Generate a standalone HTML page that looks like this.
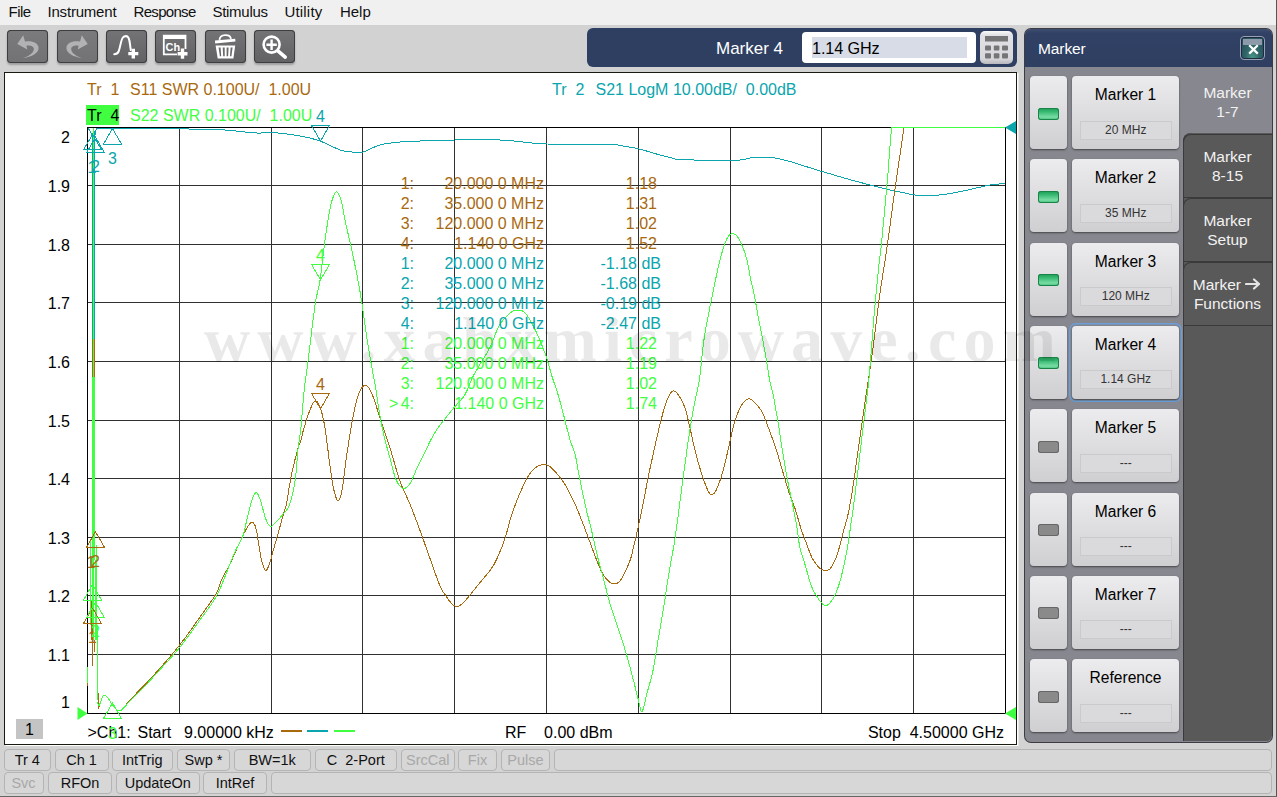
<!DOCTYPE html>
<html>
<head>
<meta charset="utf-8">
<title>Network Analyzer</title>
<style>
html,body{margin:0;padding:0;}
body{width:1277px;height:797px;overflow:hidden;position:relative;background:#d3d3d3;font-family:"Liberation Sans",sans-serif;color:#000;}
.abs{position:absolute;}
#menubar{left:0;top:0;width:1277px;height:25px;background:#f0f0f0;}
#menubar span{position:absolute;top:3px;font-size:15px;color:#111;white-space:nowrap;}
#toolbar{left:0;top:25px;width:1277px;height:47px;background:#d2d2d2;}
.tbtn{position:absolute;top:30px;width:41px;height:33px;border-radius:4px;background:linear-gradient(#747477,#626265);box-shadow:0 0 0 1px #3e3e40 inset,0 2px 2px rgba(0,0,0,.25);}
.tbtn.dis{background:linear-gradient(#7b7b7e,#727275);}
.tbtn svg{position:absolute;left:0;top:0;}
#entry{left:587px;top:28px;width:430px;height:39px;background:#2f3f62;border-radius:6px;}
#entry .lbl{position:absolute;left:129px;top:10.5px;font-size:17px;color:#fff;white-space:nowrap;}
#entry .inp{position:absolute;left:215px;top:4px;width:174px;height:31px;background:#fff;border-radius:4px;}
#entry .sel{position:absolute;left:10px;top:5px;width:155px;height:21px;background:#d8dce7;}
#entry .val{position:absolute;left:10px;top:6.5px;font-size:16.2px;letter-spacing:-0.1px;color:#000;white-space:nowrap;}
#entry .kp{position:absolute;left:393px;top:3px;width:33px;height:33px;border-radius:5px;background:linear-gradient(#fafafa 0,#e2e2e6 12%,#d6d6da 85%,#b8b8bc 100%);}
#plotwin{left:4px;top:72px;width:1013px;height:673px;background:#fff;border:1px solid #1a1a10;box-sizing:border-box;box-shadow:1.5px 1px 0 #fff;}
#plotsvg{left:0;top:0;}
.t17{font-size:17px;white-space:nowrap;position:absolute;}
#panel{left:1025px;top:29px;width:247px;height:713px;background:#87878f;border-radius:6px;box-shadow:0 0 0 1px #3c3c42;}
#phead{left:0;top:0;width:247px;height:38px;background:linear-gradient(#3d4d70 0,#314165 12%,#2f3f62 100%);border-radius:6px 6px 0 0;}
#phead .ttl{position:absolute;left:13px;top:11px;color:#fff;font-size:15.5px;letter-spacing:-0.1px;}
#tabs{left:158px;top:104px;width:89px;height:608px;background:#595959;border-radius:8px 0 6px 0;box-shadow:1px 0 0 #3a3a3a inset;}
.tabbox{position:absolute;left:158px;width:89px;height:64.6px;box-sizing:border-box;border:1px solid #3a3a3a;border-right:none;border-radius:8px 0 0 0;background:#595959;}
.tab{position:absolute;left:158px;width:89px;text-align:center;color:#f2f2f2;font-size:15.5px;line-height:19.3px;white-space:nowrap;}
#phead .cls{position:absolute;left:215px;top:7px;width:25px;height:24px;box-sizing:border-box;border:1px solid #97a1b3;border-radius:4px;background:radial-gradient(ellipse at 50% 100%,#4c9a88 0,#2f6468 45%,#254a58 100%);box-shadow:0 0 0 1px #1c2a40 inset;}
#phead .cls .hl{position:absolute;left:2px;top:2px;width:19px;height:6px;background:#8c9aa9;}
.tog{position:absolute;left:5px;width:37px;height:73px;border-radius:4px;background:linear-gradient(#ececee,#cfcfd2);box-shadow:0 1px 2px rgba(0,0,0,.5);}
.led{position:absolute;left:8px;top:31.5px;width:21px;height:12px;border-radius:3px;background:#8a8a8a;box-shadow:0 0 0 1px #666 inset;}
.led.on{background:linear-gradient(#1f9a55 0,#35b870 30%,#7adca4 75%,#3fbf7a 100%);box-shadow:0 0 0 1px #1a8448 inset;}
.mb{position:absolute;left:47px;width:107px;height:73px;border-radius:4px;background:linear-gradient(#ececee,#cfcfd2);box-shadow:0 1px 2px rgba(0,0,0,.5);}
.mb .n{position:absolute;left:0;top:10px;width:107px;text-align:center;font-size:15.6px;color:#000;}
.mb .v{position:absolute;left:7.5px;top:44.5px;width:92.5px;height:19px;background:#dadadc;box-shadow:0 0 0 1px #cacacc inset;text-align:center;font-size:12px;line-height:19px;color:#333;}
.mb.act{box-shadow:0 1px 2px rgba(0,0,0,.5),0 0 0 1.6px #87878f,0 0 0 3px #6a9ed8;}
#wm{left:204px;top:303.5px;font-family:"Liberation Serif",serif;font-weight:bold;font-size:64px;letter-spacing:7.1px;color:rgba(0,0,0,0.085);white-space:nowrap;line-height:71px;}
.sbtn{position:absolute;height:21.5px;box-sizing:border-box;border-radius:4px;background:#d7d7d7;border:1px solid #b4b4b4;font-size:14.5px;line-height:20.5px;text-align:center;color:#111;white-space:nowrap;}
.sbtn.dis{color:#a8a8a8;}
</style>
</head>
<body>
<div id="menubar" class="abs">
<span style="left:8.5px;letter-spacing:-0.5px">File</span><span style="left:47.5px;letter-spacing:-0.2px">Instrument</span><span style="left:133.5px;letter-spacing:-0.68px">Response</span><span style="left:212.4px;letter-spacing:-0.26px">Stimulus</span><span style="left:284.4px;letter-spacing:0.2px">Utility</span><span style="left:339.9px">Help</span>
</div>
<div id="toolbar" class="abs"></div>
<div class="tbtn dis" style="left:7px"><svg width="41" height="33" viewBox="0 0 41 33"><path d="M16.2,5.3 L10.3,14.1 L20.3,19.4 L19.4,15.8 C23,15 27,16.5 26.8,19.2 C26.5,23 22,26 15.8,28.2 C24,27 31.6,23.5 31.6,18 C31.6,13 25,10.3 18,11.6 Z" fill="#b2b2b4"/></svg></div>
<div class="tbtn dis" style="left:57px"><svg width="41" height="33" viewBox="0 0 41 33"><g transform="translate(41,0) scale(-1,1)"><path d="M16.2,5.3 L10.3,14.1 L20.3,19.4 L19.4,15.8 C23,15 27,16.5 26.8,19.2 C26.5,23 22,26 15.8,28.2 C24,27 31.6,23.5 31.6,18 C31.6,13 25,10.3 18,11.6 Z" fill="#b2b2b4"/></g></svg></div>
<div class="tbtn" style="left:106px"><svg width="41" height="33" viewBox="0 0 41 33"><path d="M8.2,24.2 C10,24.2 11.5,24 12.6,21.5 C14.5,17 15,8 17.5,6.8 C19.5,5.8 21.5,6 22.6,8 C24,11 24,15.5 24.8,20" stroke="#fff" stroke-width="2" fill="none" stroke-linecap="round"/><path d="M22.3,23.6 H32.3 M27.3,18.8 V28.6" stroke="#fff" stroke-width="3.4" fill="none"/></svg></div>
<div class="tbtn" style="left:155px"><svg width="41" height="33" viewBox="0 0 41 33"><path d="M7.9,4.7 H31.4 V19 H29.6 V9 H9.7 V23.5 H22 V25.3 H7.9 Z" fill="#fff"/><text x="10.6" y="21" font-size="11.5" font-weight="bold" fill="#fff" font-family="Liberation Sans, sans-serif" textLength="14.5" lengthAdjust="spacingAndGlyphs">Ch</text><path d="M22.6,23.7 H32.5 M27.5,18.6 V28.8" stroke="#fff" stroke-width="3.4" fill="none"/></svg></div>
<div class="tbtn" style="left:205px"><svg width="41" height="33" viewBox="0 0 41 33"><path d="M14.5,9.8 C15,4 25,3.5 26,8.8" stroke="#fff" stroke-width="1.8" fill="none"/><path d="M10,10.6 L30.2,8.8 L30.4,11.6 L10.2,13.4 Z" fill="#fff"/><path d="M10.6,15.6 H30.2 L28.4,28.4 H12.7 Z M13.6,17.6 L14.9,26.2 H16.2 L15.6,17.6 Z M17.7,17.6 L18.2,26.2 H19.7 V17.6 Z M21.6,17.6 V26.2 H23.1 L23.6,17.6 Z M25.6,17.6 L25,26.2 H26.4 L27.6,17.6 Z" fill="#fff" fill-rule="evenodd"/></svg></div>
<div class="tbtn" style="left:254px"><svg width="41" height="33" viewBox="0 0 41 33"><circle cx="17.6" cy="14.6" r="8" stroke="#fff" stroke-width="2.6" fill="none"/><path d="M12.4,14.8 H22.8 M17.6,9.6 V20" stroke="#fff" stroke-width="2.4" fill="none"/><path d="M24.2,21.2 L31.2,27.2" stroke="#fff" stroke-width="3.6" stroke-linecap="round"/></svg></div>
<div id="entry" class="abs"><div class="lbl">Marker 4</div><div class="inp"><div class="sel"></div><div class="val">1.14 GHz</div></div><div class="kp"><svg width="33" height="33" viewBox="0 0 33 33" style="position:absolute;left:0;top:0"><g fill="#757577"><rect x="5" y="5" width="23" height="5.5"/><rect x="5" y="14.4" width="6" height="5" rx="1"/><rect x="13.8" y="14.4" width="5.6" height="5" rx="1"/><rect x="22" y="14.4" width="6" height="5" rx="1"/><rect x="5" y="22.2" width="6" height="5.4" rx="1"/><rect x="13.8" y="22.2" width="5.6" height="5.4" rx="1"/><rect x="22" y="22.2" width="6" height="5.4" rx="1"/></g></svg></div></div>
<div id="plotwin" class="abs"></div>
<svg id="plotsvg" class="abs" width="1277" height="797" viewBox="0 0 1277 797" style="font-family:'Liberation Sans',sans-serif">
<g shape-rendering="crispEdges" stroke="#303030" stroke-width="1">
<line x1="179.5" y1="127.5" x2="179.5" y2="713.5"/>
<line x1="87.5" y1="185.5" x2="1005.5" y2="185.5"/>
<line x1="271.5" y1="127.5" x2="271.5" y2="713.5"/>
<line x1="87.5" y1="244.5" x2="1005.5" y2="244.5"/>
<line x1="362.5" y1="127.5" x2="362.5" y2="713.5"/>
<line x1="87.5" y1="302.5" x2="1005.5" y2="302.5"/>
<line x1="454.5" y1="127.5" x2="454.5" y2="713.5"/>
<line x1="87.5" y1="361.5" x2="1005.5" y2="361.5"/>
<line x1="546.5" y1="127.5" x2="546.5" y2="713.5"/>
<line x1="87.5" y1="420.5" x2="1005.5" y2="420.5"/>
<line x1="638.5" y1="127.5" x2="638.5" y2="713.5"/>
<line x1="87.5" y1="478.5" x2="1005.5" y2="478.5"/>
<line x1="730.5" y1="127.5" x2="730.5" y2="713.5"/>
<line x1="87.5" y1="537.5" x2="1005.5" y2="537.5"/>
<line x1="821.5" y1="127.5" x2="821.5" y2="713.5"/>
<line x1="87.5" y1="595.5" x2="1005.5" y2="595.5"/>
<line x1="913.5" y1="127.5" x2="913.5" y2="713.5"/>
<line x1="87.5" y1="654.5" x2="1005.5" y2="654.5"/>
</g>
<rect x="87.5" y="127.5" width="918.0" height="586.0" fill="none" stroke="#000" stroke-width="1" shape-rendering="crispEdges"/>
<text x="70" y="142.5" font-size="16" text-anchor="end" fill="#000">2</text>
<text x="70" y="192.1" font-size="16" text-anchor="end" fill="#000">1.9</text>
<text x="70" y="250.7" font-size="16" text-anchor="end" fill="#000">1.8</text>
<text x="70" y="309.3" font-size="16" text-anchor="end" fill="#000">1.7</text>
<text x="70" y="367.9" font-size="16" text-anchor="end" fill="#000">1.6</text>
<text x="70" y="426.5" font-size="16" text-anchor="end" fill="#000">1.5</text>
<text x="70" y="485.1" font-size="16" text-anchor="end" fill="#000">1.4</text>
<text x="70" y="543.7" font-size="16" text-anchor="end" fill="#000">1.3</text>
<text x="70" y="602.3" font-size="16" text-anchor="end" fill="#000">1.2</text>
<text x="70" y="660.9" font-size="16" text-anchor="end" fill="#000">1.1</text>
<text x="70" y="707.5" font-size="16" text-anchor="end" fill="#000">1</text>
<g shape-rendering="crispEdges">
<polyline points="88.0,128.0 90.0,131.0 92.0,135.0" fill="none" stroke="#0aa5ad" stroke-width="1" />
<line x1="92.5" y1="133" x2="92.5" y2="339" stroke="#0aa5ad"/>
<line x1="94.5" y1="131" x2="94.5" y2="339" stroke="#0aa5ad"/>
<polyline points="97.0,128.6 98.8,128.6 101.2,128.6 105.2,128.6 112.0,128.6 123.0,128.6 137.2,128.6 152.1,128.6 165.0,128.6 175.2,128.7 184.2,128.9 192.4,129.1 200.0,129.3 207.2,129.5 213.8,129.6 219.7,129.8 225.0,130.0 229.4,130.3 233.0,130.7 236.4,131.1 240.0,131.5 244.3,131.9 248.8,132.4 253.1,132.7 256.7,133.0 259.2,133.1 261.0,133.0 262.5,132.9 264.0,132.8 265.5,132.7 266.8,132.5 268.2,132.4 270.0,132.4 272.0,132.5 274.1,132.6 276.7,132.8 280.0,133.2 284.3,133.7 289.4,134.3 294.8,135.1 300.0,136.0 305.0,137.0 310.0,138.1 315.0,139.4 320.0,141.0 325.2,143.1 330.5,145.7 335.6,148.1 340.0,150.0 343.6,151.0 346.6,151.6 349.3,151.8 352.0,152.0 354.7,152.3 357.2,152.6 359.9,152.5 363.0,152.0 366.8,150.6 370.9,148.7 375.4,146.6 380.0,145.0 384.8,143.9 389.8,143.1 394.9,142.5 400.0,142.0 404.6,141.6 409.1,141.4 413.9,141.2 420.0,141.0 427.5,140.7 435.9,140.4 445.2,140.2 455.0,140.0 466.1,139.9 478.4,139.8 490.3,139.9 500.0,140.0 506.6,140.3 511.1,140.7 515.1,141.2 520.0,141.7 525.4,142.3 530.8,142.9 537.6,143.5 547.0,144.0 561.5,144.2 579.6,144.3 597.1,144.4 610.0,144.5 616.0,144.7 617.8,144.8 618.2,145.1 620.0,145.5 623.8,146.1 628.2,146.8 633.0,147.6 638.0,148.7 643.5,150.1 649.4,151.9 655.1,153.6 660.0,155.0 663.8,156.0 666.9,156.8 669.5,157.4 672.0,158.0 673.8,158.5 674.9,158.9 676.5,159.2 680.0,159.5 686.0,159.8 693.6,160.0 702.0,160.2 710.0,160.3 718.0,160.3 726.2,160.3 733.9,160.2 740.0,160.0 743.9,159.6 746.1,159.0 747.8,158.5 750.0,158.0 752.8,157.7 755.8,157.4 758.9,157.3 762.0,157.2 765.1,157.2 768.3,157.3 771.6,157.6 775.0,158.0 778.7,158.7 782.7,159.6 786.6,160.6 790.0,161.5 792.6,162.2 794.6,162.9 796.8,163.6 800.0,164.6 804.3,166.0 809.3,167.6 814.9,169.3 821.0,171.2 827.9,173.2 835.6,175.5 843.2,177.7 850.0,179.6 855.6,181.2 860.6,182.5 865.2,183.7 870.0,185.0 875.1,186.3 880.3,187.7 885.4,188.9 890.0,190.0 894.2,190.9 898.1,191.7 901.7,192.4 905.0,193.0 907.6,193.6 909.7,194.2 911.9,194.6 915.0,195.0 919.4,195.2 924.7,195.4 930.1,195.4 935.0,195.3 939.0,195.0 942.5,194.7 946.0,194.2 950.0,193.5 954.6,192.7 959.7,191.7 964.9,190.6 970.0,189.5 975.1,188.3 980.3,187.1 985.4,185.9 990.0,185.0 994.5,184.4 998.8,184.0 1002.4,183.7 1005.0,183.5" fill="none" stroke="#0aa5ad" stroke-width="1" />
<polyline points="94.5,140.0 95.5,131.0 97.0,128.6" fill="none" stroke="#0aa5ad" stroke-width="1" />
<line x1="93.5" y1="339" x2="93.5" y2="377" stroke="#a8690f" stroke-width="3"/>
<line x1="92.5" y1="625.0" x2="92.5" y2="666.0" stroke="#a8690f"/>
<line x1="91.5" y1="600.0" x2="91.5" y2="640.0" stroke="#a8690f"/>
<line x1="94.5" y1="640.0" x2="94.5" y2="652.0" stroke="#a8690f"/>
<line x1="97.5" y1="647.0" x2="97.5" y2="651.0" stroke="#a8690f"/>
<line x1="97.5" y1="688.0" x2="97.5" y2="693.0" stroke="#a8690f"/>
<line x1="98.5" y1="693.0" x2="98.5" y2="709.0" stroke="#a8690f"/>
<line x1="87.5" y1="683.0" x2="87.5" y2="685.5" stroke="#a8690f"/>
<polyline points="98.6,708.9 98.8,708.0 99.2,706.6 99.5,705.1 100.0,703.5 100.5,702.0 101.1,700.5 101.7,698.9 102.4,697.3 103.2,696.0 103.9,695.3 104.7,695.2 105.4,695.4 106.3,696.1 107.1,697.0 108.0,698.0 108.9,699.3 109.9,701.0 110.9,702.8 111.9,704.5 113.0,706.0 114.1,707.3 115.3,708.6 116.6,709.8 117.8,710.6 118.9,711.0 120.0,710.8 121.0,710.2 121.9,709.2 122.9,708.1 124.0,707.0 125.0,705.9 126.0,704.7 127.1,703.4 128.3,701.9 130.0,700.0 132.2,697.7 134.7,695.1 137.5,692.2 140.3,689.3 143.0,686.5 145.4,684.0 147.7,681.7 150.0,679.3 152.7,676.4 156.0,672.7 160.2,668.0 165.0,662.5 170.2,656.5 175.3,650.4 180.0,644.6 184.3,639.0 188.5,633.3 192.5,627.7 196.3,622.2 200.0,617.0 203.6,612.0 207.2,607.0 210.5,602.3 213.5,598.0 216.0,594.0 217.7,590.7 218.8,587.9 219.6,585.4 220.4,582.9 221.6,580.0 223.2,576.8 224.9,573.5 226.8,570.1 228.7,566.4 230.6,562.6 232.6,558.3 234.7,553.6 236.8,548.8 238.8,544.4 240.6,540.5 242.1,537.3 243.4,534.6 244.5,532.3 245.6,530.3 246.7,528.4 247.8,526.6 248.8,525.0 249.8,523.7 250.8,522.8 251.7,522.4 252.6,522.5 253.4,523.0 254.2,524.0 255.0,525.4 255.7,527.4 256.4,530.1 257.0,533.4 257.5,537.2 258.1,541.0 258.7,544.5 259.3,547.9 259.9,551.3 260.4,554.6 261.0,557.8 261.7,560.6 262.4,563.3 263.2,565.9 264.0,568.2 264.9,569.8 265.7,570.6 266.5,570.2 267.3,569.0 268.2,567.1 269.0,564.9 269.8,562.6 270.6,560.2 271.4,557.4 272.2,554.4 273.0,551.4 273.8,548.5 274.6,545.8 275.4,543.1 276.1,540.4 276.9,537.6 277.8,534.5 278.8,531.1 279.8,527.4 280.8,523.5 281.8,519.8 282.8,516.4 283.7,513.5 284.5,511.0 285.2,508.5 286.0,505.7 286.8,502.3 287.6,498.2 288.3,493.5 289.0,488.5 289.9,483.3 290.8,478.2 291.9,472.9 293.2,467.2 294.5,461.6 295.8,456.4 296.9,452.0 297.8,448.7 298.7,446.2 299.5,444.1 300.2,442.2 300.9,440.0 301.5,437.7 302.1,435.5 302.6,433.2 303.2,430.8 304.0,428.0 305.0,424.6 306.2,420.8 307.5,416.8 308.8,413.1 310.0,410.0 311.1,407.4 312.1,405.0 313.0,403.1 314.0,401.7 315.0,401.0 316.0,401.0 317.0,401.6 318.0,402.8 319.0,404.6 320.0,407.0 321.0,410.0 322.0,413.5 323.0,417.6 324.0,422.4 325.0,428.0 326.0,434.8 327.0,442.8 328.1,451.2 329.1,459.4 330.0,466.4 330.9,472.4 331.7,477.7 332.4,482.6 333.2,486.8 334.0,490.5 334.8,493.7 335.6,496.5 336.4,498.6 337.2,500.0 338.0,500.5 338.8,500.1 339.6,498.9 340.4,496.9 341.2,494.1 342.0,490.5 342.8,485.8 343.5,480.1 344.3,473.7 345.1,466.9 346.0,460.0 347.1,452.7 348.3,444.8 349.5,436.7 350.8,429.0 352.0,422.0 353.2,415.8 354.4,410.0 355.5,404.7 356.7,400.0 358.0,396.0 359.3,392.5 360.7,389.6 362.2,387.2 363.6,385.7 365.0,385.0 366.4,385.3 367.8,386.4 369.1,388.4 370.5,390.9 372.0,394.0 373.5,397.7 375.0,402.2 376.6,407.2 378.3,412.6 380.0,418.0 381.9,423.6 383.9,429.4 385.9,435.5 388.0,441.7 390.0,448.0 392.0,454.6 394.0,461.5 396.0,468.5 398.0,475.2 400.0,481.2 402.0,486.4 404.0,491.0 406.0,495.3 408.0,499.6 410.0,504.3 412.0,509.3 414.0,514.4 416.0,519.7 418.0,525.0 420.0,530.4 422.0,535.9 424.0,541.5 426.0,547.2 428.0,552.9 430.0,558.5 432.1,564.3 434.2,570.4 436.3,576.3 438.3,581.6 440.0,586.0 441.5,589.2 442.7,591.4 443.8,593.0 444.9,594.4 446.0,596.0 447.2,597.8 448.4,599.6 449.7,601.3 450.9,602.8 452.0,604.0 453.0,604.9 454.0,605.7 455.0,606.2 456.0,606.5 457.0,606.5 458.1,606.3 459.3,605.7 460.5,605.0 461.7,604.1 463.0,603.0 464.3,601.8 465.6,600.3 466.9,598.7 468.4,597.0 470.0,595.0 471.8,592.8 473.8,590.3 475.9,587.7 478.0,585.1 480.0,582.6 482.0,580.2 484.1,577.7 486.2,575.3 488.2,572.9 490.0,570.5 491.6,568.2 493.0,566.1 494.3,563.9 495.6,561.4 497.0,558.5 498.6,555.0 500.3,550.9 502.0,546.7 503.6,542.4 505.0,538.4 506.2,534.7 507.1,531.1 508.0,527.6 508.9,524.0 510.0,520.3 511.3,516.4 512.6,512.3 514.0,508.2 515.5,504.1 517.0,500.2 518.6,496.3 520.2,492.5 521.9,488.7 523.5,485.3 525.0,482.2 526.3,479.6 527.5,477.4 528.7,475.4 529.8,473.7 531.0,472.1 532.2,470.7 533.4,469.4 534.5,468.4 535.7,467.5 537.0,466.7 538.4,466.0 539.8,465.5 541.2,465.0 542.6,464.8 544.0,464.7 545.2,464.7 546.4,464.9 547.5,465.2 548.7,465.8 550.0,466.7 551.5,467.9 553.1,469.5 554.7,471.2 556.4,473.1 558.0,475.1 559.6,477.0 561.1,478.9 562.7,481.0 564.3,483.4 566.0,486.2 567.9,489.6 570.0,493.6 572.0,497.8 574.1,502.1 576.0,506.3 577.8,510.4 579.4,514.5 581.0,518.6 582.6,522.6 584.0,526.3 585.3,529.8 586.5,533.0 587.7,536.1 588.8,539.2 590.0,542.4 591.2,545.7 592.4,548.9 593.6,552.2 594.8,555.4 596.0,558.5 597.2,561.5 598.4,564.5 599.6,567.4 600.8,570.1 602.0,572.5 603.2,574.6 604.4,576.4 605.6,578.0 606.8,579.4 608.0,580.6 609.2,581.7 610.4,582.7 611.5,583.4 612.7,583.9 614.0,584.0 615.3,583.9 616.6,583.5 618.0,582.8 619.5,581.5 621.0,579.6 622.8,576.7 624.7,572.8 626.7,568.6 628.5,564.3 630.0,560.5 631.1,557.2 632.0,554.1 632.6,551.1 633.3,548.1 634.0,545.0 634.8,541.8 635.6,538.6 636.3,535.3 637.1,531.8 638.0,528.0 638.9,523.8 639.9,519.2 641.0,514.4 642.0,509.5 643.0,504.5 644.0,499.5 645.0,494.3 645.9,489.1 646.9,483.8 648.0,478.4 649.1,472.9 650.3,467.2 651.6,461.5 652.8,455.8 654.0,450.3 655.2,444.8 656.4,439.3 657.7,434.0 658.9,428.9 660.0,424.2 661.1,420.0 662.1,416.1 663.0,412.5 664.0,409.1 665.0,406.0 666.0,403.1 667.0,400.3 668.1,397.9 669.1,395.7 670.0,394.0 670.8,392.7 671.6,391.8 672.4,391.2 673.2,390.9 674.0,391.0 674.9,391.4 675.9,392.1 676.9,393.1 677.9,394.4 679.0,396.0 680.2,397.8 681.4,399.9 682.6,402.3 683.8,405.0 685.0,408.0 686.1,411.5 687.1,415.3 688.0,419.5 689.0,423.7 690.0,428.0 691.0,432.4 692.0,437.0 693.0,441.6 694.0,446.1 695.0,450.3 696.0,454.2 697.0,458.0 698.0,461.6 699.0,465.0 700.0,468.4 701.0,471.7 702.0,474.9 703.1,478.0 704.1,480.9 705.0,483.5 705.9,485.8 706.7,487.9 707.5,489.7 708.3,491.2 709.0,492.5 709.6,493.4 710.2,494.1 710.8,494.5 711.4,494.6 712.0,494.5 712.7,494.3 713.4,493.9 714.2,493.3 715.1,492.2 716.0,490.5 717.1,488.2 718.3,485.3 719.5,482.0 720.8,478.3 722.0,474.4 723.2,470.1 724.4,465.4 725.6,460.5 726.8,455.4 728.0,450.3 729.2,445.0 730.4,439.5 731.6,434.0 732.8,428.8 734.0,424.2 735.2,420.2 736.4,416.6 737.7,413.3 738.9,410.5 740.0,408.0 741.1,405.9 742.1,404.3 743.0,403.0 744.0,401.9 745.0,401.0 746.0,400.2 747.0,399.6 748.0,399.1 749.0,398.9 750.0,399.0 751.0,399.3 751.9,399.9 752.9,400.8 753.9,401.8 755.0,403.0 756.3,404.3 757.6,405.7 759.0,407.4 760.5,409.4 762.0,412.0 763.6,415.3 765.2,419.2 766.8,423.5 768.4,427.8 770.0,432.0 771.5,436.0 772.9,440.1 774.3,444.2 775.7,448.2 777.0,452.3 778.3,456.3 779.5,460.4 780.6,464.4 781.8,468.4 783.0,472.4 784.2,476.5 785.4,480.6 786.6,484.8 787.8,488.7 789.0,492.5 790.2,495.9 791.4,499.0 792.6,502.0 793.8,505.1 795.0,508.5 796.2,512.3 797.4,516.4 798.6,520.6 799.8,524.8 801.0,528.6 802.2,532.2 803.4,535.6 804.7,538.9 805.9,542.0 807.0,545.0 808.0,547.8 809.0,550.5 810.0,553.1 811.0,555.5 812.0,557.7 813.2,559.8 814.4,561.7 815.7,563.5 816.9,565.1 818.0,566.4 818.9,567.4 819.7,568.1 820.5,568.6 821.2,569.0 822.0,569.4 822.8,569.8 823.6,570.2 824.3,570.6 825.1,570.7 826.0,570.7 826.9,570.5 827.9,570.1 829.0,569.6 830.0,568.8 831.0,567.7 832.0,566.2 833.0,564.3 834.1,562.2 835.1,560.0 836.0,557.7 836.9,555.3 837.7,552.8 838.5,550.2 839.3,547.6 840.0,545.0 840.6,542.6 841.2,540.3 841.7,537.9 842.3,535.4 843.0,532.6 843.9,529.5 844.9,526.3 845.9,522.8 847.0,518.9 848.0,514.6 849.0,509.6 850.0,504.1 851.1,498.2 852.1,492.3 853.0,486.5 853.9,480.9 854.7,475.3 855.4,469.7 856.2,464.0 857.0,458.4 857.8,452.7 858.6,447.0 859.4,441.3 860.2,435.7 861.0,430.0 861.8,424.3 862.6,418.7 863.4,413.0 864.2,407.5 865.0,402.0 865.8,396.8 866.6,391.9 867.3,387.0 868.1,381.8 869.0,376.0 869.9,369.6 870.9,362.7 872.0,355.5 873.0,348.1 874.0,340.5 875.0,332.4 876.1,323.7 877.1,315.0 878.1,306.9 879.0,300.0 879.7,294.9 880.2,291.3 880.7,288.2 881.3,284.7 882.0,280.0 882.9,274.2 883.9,267.8 885.0,260.8 886.2,252.9 887.5,244.0 888.9,233.7 890.5,222.2 892.1,209.9 893.8,197.5 895.5,185.5 897.3,172.9 899.3,159.5 901.2,146.5 902.8,135.4 904.0,127.5" fill="none" stroke="#a8690f" stroke-width="1" />
<line x1="93.5" y1="128.0" x2="93.5" y2="640.0" stroke="#40ff40"/>
<line x1="92.5" y1="377.0" x2="92.5" y2="625.0" stroke="#40ff40"/>
<line x1="94.5" y1="377.0" x2="94.5" y2="560.0" stroke="#40ff40"/>
<line x1="90.5" y1="540.0" x2="90.5" y2="625.0" stroke="#40ff40"/>
<line x1="95.5" y1="560.0" x2="95.5" y2="640.0" stroke="#40ff40"/>
<line x1="96.5" y1="545.0" x2="96.5" y2="640.0" stroke="#40ff40"/>
<line x1="97.5" y1="625.0" x2="97.5" y2="700.0" stroke="#40ff40"/>
<line x1="87.5" y1="667.0" x2="87.5" y2="683.0" stroke="#40ff40"/>
<polyline points="97.4,702.0 97.6,702.7 97.9,703.7 98.3,704.8 98.7,705.6 99.0,706.0 99.3,705.8 99.5,705.1 99.8,704.2 100.1,703.1 100.5,702.0 101.0,700.7 101.7,699.1 102.4,697.4 103.1,696.1 103.9,695.3 104.7,695.2 105.4,695.4 106.3,696.1 107.1,697.0 108.0,698.0 108.9,699.3 109.9,701.0 110.9,702.8 111.9,704.5 113.0,706.0 114.1,707.3 115.3,708.6 116.6,709.8 117.8,710.6 118.9,711.0 120.0,710.9 121.0,710.4 121.9,709.5 122.9,708.5 124.0,707.5 125.0,706.5 126.0,705.4 127.1,704.2 128.3,702.8 130.0,701.0 132.2,698.8 134.7,696.3 137.5,693.6 140.3,690.8 143.0,688.0 145.4,685.5 147.7,683.1 150.0,680.6 152.7,677.6 156.0,674.0 160.2,669.4 165.0,664.1 170.2,658.4 175.3,652.6 180.0,647.0 184.3,641.5 188.5,636.0 192.5,630.5 196.3,625.1 200.0,620.0 203.6,615.0 207.1,610.2 210.4,605.6 213.4,601.2 216.0,597.0 218.0,593.4 219.5,590.3 220.7,587.3 222.0,584.0 223.6,580.0 225.6,575.0 227.9,569.2 230.2,563.2 232.5,557.4 234.6,552.5 236.5,548.6 238.2,545.3 239.9,542.4 241.4,539.5 242.7,536.5 243.8,533.3 244.6,530.1 245.3,526.8 246.0,523.6 246.7,520.4 247.5,517.1 248.3,513.6 249.2,510.2 250.0,507.1 250.7,504.3 251.4,501.9 252.0,499.9 252.5,498.1 253.1,496.6 253.7,495.3 254.3,494.3 254.9,493.5 255.5,493.0 256.1,492.8 256.7,492.9 257.3,493.4 257.9,494.3 258.5,495.4 259.1,496.8 259.7,498.3 260.3,500.0 260.9,501.9 261.4,503.9 262.0,506.1 262.7,508.4 263.4,510.9 264.2,513.8 265.0,516.6 265.9,519.3 266.7,521.4 267.5,523.1 268.3,524.4 269.1,525.4 269.9,526.1 270.8,526.4 271.7,526.2 272.6,525.6 273.6,524.7 274.7,523.6 275.8,522.4 277.1,521.1 278.5,519.5 280.0,517.8 281.4,516.1 282.8,514.4 284.1,512.9 285.4,511.5 286.6,510.0 287.7,508.3 288.8,506.3 289.8,503.9 290.6,501.3 291.4,498.5 292.2,495.5 292.9,492.3 293.6,489.0 294.2,485.6 294.8,482.1 295.4,478.3 295.9,474.2 296.3,469.7 296.7,464.9 297.1,459.8 297.5,454.8 297.9,450.0 298.4,445.7 299.0,441.7 299.6,437.7 300.3,433.3 300.9,428.0 301.5,421.6 302.1,414.4 302.7,406.7 303.3,399.1 304.0,392.0 304.7,385.9 305.4,380.4 306.1,374.9 307.0,368.7 308.0,361.0 309.2,351.0 310.7,339.1 312.2,326.7 313.7,315.0 315.0,305.5 316.1,298.7 317.2,293.6 318.2,289.5 319.1,285.4 320.0,280.4 320.9,274.2 321.7,267.5 322.5,260.7 323.2,254.0 324.0,247.8 324.7,242.2 325.5,237.0 326.2,232.0 326.9,227.3 327.6,222.7 328.3,218.2 329.0,213.9 329.8,209.7 330.6,205.9 331.4,202.6 332.3,199.5 333.3,196.6 334.3,194.2 335.4,192.5 336.4,191.8 337.4,192.2 338.5,193.6 339.5,195.8 340.5,198.4 341.4,201.3 342.2,204.6 342.9,208.5 343.7,212.8 344.4,217.1 345.2,221.4 346.1,225.4 347.1,229.4 348.0,233.5 349.1,237.9 350.2,242.7 351.4,248.2 352.7,254.2 354.0,260.5 355.3,266.8 356.5,272.8 357.6,278.4 358.6,283.7 359.6,289.0 360.5,294.5 361.5,300.5 362.5,307.1 363.5,314.2 364.5,321.6 365.5,328.8 366.5,335.6 367.5,342.0 368.6,348.3 369.6,354.3 370.6,360.1 371.6,365.7 372.5,370.9 373.4,375.8 374.3,380.4 375.2,385.1 376.0,390.0 376.8,395.1 377.6,400.4 378.3,405.7 379.1,410.9 380.0,416.0 380.9,421.0 381.9,426.0 383.0,430.9 384.0,435.6 385.0,440.0 386.0,443.9 387.0,447.5 387.9,450.8 388.9,454.3 390.0,458.0 391.1,462.3 392.3,466.9 393.5,471.6 394.7,475.9 396.0,479.4 397.3,482.2 398.7,484.6 400.2,486.5 401.6,487.8 403.0,488.5 404.4,488.5 405.8,487.9 407.3,486.8 408.7,485.2 410.0,483.5 411.2,481.5 412.4,479.0 413.5,476.3 414.7,473.4 416.0,470.4 417.4,467.4 419.0,464.3 420.6,461.0 422.2,457.6 424.0,454.0 425.9,450.1 427.9,446.0 429.9,441.7 432.0,437.7 434.0,434.0 436.0,430.8 438.0,427.9 439.9,425.3 441.9,422.7 444.0,420.0 446.2,417.2 448.4,414.5 450.6,411.8 452.8,409.1 455.0,406.5 457.1,404.1 459.2,401.8 461.3,399.5 463.2,397.1 465.0,394.5 466.6,391.5 468.0,388.3 469.3,384.9 470.6,381.6 472.0,378.4 473.5,375.5 475.0,372.8 476.6,370.1 478.3,367.3 480.0,364.3 481.9,361.1 484.0,357.8 486.0,354.4 488.1,350.9 490.0,347.3 491.7,343.4 493.4,339.3 495.0,335.2 496.5,331.3 498.0,328.0 499.5,325.3 500.9,323.2 502.2,321.3 503.6,319.6 505.0,318.0 506.4,316.4 507.8,315.0 509.3,313.7 510.7,312.6 512.0,311.7 513.3,311.0 514.5,310.5 515.6,310.2 516.8,310.0 518.0,310.0 519.2,310.1 520.4,310.2 521.6,310.6 522.8,311.2 524.0,312.0 525.2,313.1 526.3,314.4 527.5,315.9 528.7,317.8 530.0,320.0 531.5,322.6 533.1,325.6 534.7,328.9 536.4,332.4 538.0,336.0 539.6,339.7 541.3,343.7 542.9,347.8 544.5,351.9 546.0,356.0 547.3,360.1 548.5,364.2 549.7,368.4 550.8,372.5 552.0,376.4 553.2,380.1 554.4,383.6 555.6,387.1 556.8,390.7 558.0,394.5 559.2,398.6 560.4,402.9 561.6,407.4 562.8,411.9 564.0,416.5 565.2,421.3 566.4,426.2 567.7,431.2 568.9,435.9 570.0,440.0 571.1,443.2 572.1,445.7 573.0,448.0 574.0,450.6 575.0,454.0 576.0,458.4 577.0,463.5 577.9,469.0 578.9,474.6 580.0,480.2 581.1,485.8 582.3,491.5 583.6,497.3 584.8,502.9 586.0,508.3 587.2,513.3 588.4,518.1 589.6,522.8 590.8,527.5 592.0,532.4 593.2,537.6 594.4,542.9 595.6,548.3 596.8,553.5 598.0,558.5 599.2,563.2 600.4,567.6 601.6,571.9 602.8,576.2 604.0,580.6 605.2,585.3 606.4,590.1 607.6,595.0 608.8,599.6 610.0,604.0 611.2,607.9 612.4,611.6 613.6,615.1 614.8,618.5 616.0,622.0 617.2,625.6 618.4,629.1 619.6,632.7 620.8,636.3 622.0,640.0 623.2,643.8 624.4,647.7 625.6,651.7 626.8,655.8 628.0,660.0 629.2,664.4 630.5,669.1 631.7,673.8 632.9,678.3 634.0,682.4 634.9,686.1 635.7,689.4 636.5,692.6 637.2,695.6 638.0,698.5 638.8,701.8 639.6,705.4 640.3,708.7 641.1,711.0 642.0,711.5 642.9,709.9 643.9,706.6 644.9,702.2 645.9,697.5 647.0,693.0 648.2,688.9 649.4,684.7 650.6,680.3 651.8,675.6 653.0,670.6 654.0,665.2 655.0,659.4 656.0,653.3 657.0,647.0 658.0,640.5 659.2,633.7 660.4,626.7 661.6,619.4 662.8,612.3 664.0,605.3 665.1,598.5 666.1,591.8 667.0,585.3 668.0,578.9 669.0,572.7 670.0,566.7 671.1,560.9 672.1,555.4 673.1,550.0 674.0,545.0 674.7,540.6 675.2,536.9 675.8,533.3 676.3,529.1 677.0,524.0 677.9,517.7 678.8,510.5 679.8,502.8 680.9,494.7 682.0,486.5 683.1,478.0 684.3,468.9 685.6,459.7 686.8,450.7 688.0,442.3 689.2,434.4 690.4,426.7 691.7,419.4 692.8,412.5 694.0,406.0 695.1,400.3 696.2,395.3 697.3,390.6 698.3,385.6 699.3,380.0 700.2,373.3 701.0,365.9 701.8,358.3 702.5,351.0 703.3,344.5 704.1,338.9 704.9,333.8 705.7,329.2 706.5,324.8 707.3,320.4 708.1,316.2 708.9,312.3 709.6,308.4 710.4,304.5 711.3,300.3 712.3,295.6 713.3,290.7 714.3,285.6 715.3,280.7 716.3,276.2 717.2,272.2 718.0,268.5 718.7,265.0 719.5,261.6 720.4,258.2 721.4,254.7 722.4,251.2 723.4,247.8 724.4,244.7 725.4,242.1 726.3,240.0 727.1,238.4 727.8,237.1 728.6,236.1 729.4,235.2 730.2,234.5 731.0,234.0 731.8,233.8 732.6,233.7 733.4,233.8 734.2,234.0 735.0,234.4 735.8,234.9 736.6,235.7 737.4,236.6 738.2,237.7 738.9,238.9 739.7,240.4 740.5,242.1 741.4,244.1 742.4,246.4 743.4,249.0 744.5,251.8 745.5,254.9 746.5,258.2 747.4,261.9 748.2,265.9 749.0,270.1 749.7,274.2 750.5,278.2 751.3,281.9 752.1,285.4 752.9,288.9 753.7,292.5 754.5,296.3 755.3,300.5 756.1,304.9 756.9,309.5 757.7,314.0 758.5,318.4 759.3,322.5 760.1,326.5 760.9,330.4 761.7,334.4 762.5,338.5 763.3,342.8 764.1,347.3 765.0,351.9 765.8,356.3 766.5,360.6 767.2,364.7 767.8,368.8 768.4,372.8 769.0,376.5 769.6,380.0 770.2,382.9 770.9,385.3 771.5,387.6 772.2,390.4 773.0,394.0 773.9,398.7 774.9,404.1 775.9,410.0 777.0,416.1 778.0,422.2 779.0,428.4 780.0,434.9 781.0,441.6 782.0,448.1 783.0,454.3 784.0,460.3 785.0,466.1 786.0,471.7 787.0,477.2 788.0,482.5 789.0,487.6 790.0,492.5 791.1,497.3 792.1,501.9 793.0,506.5 793.9,511.0 794.7,515.4 795.5,519.7 796.3,523.9 797.0,528.0 797.6,532.0 798.1,536.0 798.6,539.8 799.2,543.7 800.0,547.6 801.0,551.6 802.2,555.7 803.5,559.8 804.8,563.8 806.0,567.7 807.0,571.5 808.0,575.2 809.0,578.8 810.0,582.2 811.0,585.3 812.2,588.0 813.4,590.5 814.6,592.7 815.8,594.7 817.0,596.6 818.1,598.3 819.1,599.8 820.1,601.1 821.1,602.3 822.0,603.3 822.8,604.2 823.6,604.9 824.4,605.5 825.2,605.8 826.0,605.8 826.9,605.5 827.9,604.8 829.0,603.9 830.0,602.8 831.0,601.6 832.0,600.2 833.0,598.7 834.0,597.0 835.0,595.0 836.0,592.8 837.0,590.3 838.0,587.6 839.0,584.6 840.0,581.3 841.0,577.7 842.0,573.6 843.1,568.9 844.1,564.1 845.1,559.3 846.0,555.0 846.7,551.2 847.4,547.7 847.9,544.3 848.5,541.0 849.0,537.6 849.5,534.1 850.0,530.6 850.5,527.0 851.0,523.5 851.5,520.0 852.0,516.7 852.4,513.7 852.9,510.5 853.4,506.9 854.0,502.5 854.7,497.0 855.5,490.8 856.3,484.1 857.2,477.2 858.0,470.4 858.8,463.7 859.6,456.8 860.4,449.9 861.2,443.0 862.0,436.3 862.8,429.6 863.6,422.9 864.5,416.4 865.3,410.0 866.0,404.0 866.6,399.0 867.2,394.9 867.7,390.7 868.3,385.4 869.0,378.0 869.9,367.8 870.9,355.5 871.9,342.1 873.0,328.7 874.0,316.4 875.0,304.8 876.1,293.3 877.2,282.3 878.2,272.4 879.0,264.2 879.6,258.7 880.0,255.7 880.3,253.3 880.8,250.0 881.4,244.0 882.3,234.7 883.4,223.3 884.6,210.7 885.8,197.8 886.9,185.5 888.0,172.9 889.0,159.5 890.0,146.5 890.9,135.4 891.5,127.5 1005.0,127.5" fill="none" stroke="#40ff40" stroke-width="1" />
</g>
<rect x="16" y="719" width="27" height="20" fill="#c4c4c4"/>
<text x="29.5" y="735" font-size="16" text-anchor="middle" fill="#000">1</text>
<text x="87.5" y="738" font-size="16" fill="#000" xml:space="preserve">&gt;Ch1:</text><text x="137.5" y="738" font-size="16" fill="#000">Start</text><text x="184" y="738" font-size="16" fill="#000">9.00000 kHz</text>
<g shape-rendering="crispEdges" stroke-width="2"><line x1="281" y1="731" x2="302" y2="731" stroke="#a8690f"/><line x1="307" y1="731" x2="328" y2="731" stroke="#0aa5ad"/><line x1="334" y1="731" x2="355" y2="731" stroke="#40ff40"/></g>
<text x="505" y="738" font-size="16" fill="#000" xml:space="preserve">RF    0.00 dBm</text>
<text x="1004" y="738" font-size="16" text-anchor="end" fill="#000" xml:space="preserve">Stop  4.50000 GHz</text>
<polygon points="83.5,149.9 101.5,149.9 92.5,134.4" fill="none" stroke="#0aa5ad" stroke-width="1" shape-rendering="crispEdges"/>
<polygon points="86.5,152.8 104.5,152.8 95.5,137.3" fill="none" stroke="#0aa5ad" stroke-width="1" shape-rendering="crispEdges"/><text x="95.5" y="172.3" font-size="16" text-anchor="middle" fill="#0aa5ad">2</text>
<polygon points="103.5,144.1 121.5,144.1 112.5,128.6" fill="none" stroke="#0aa5ad" stroke-width="1" shape-rendering="crispEdges"/><text x="112.5" y="163.6" font-size="16" text-anchor="middle" fill="#0aa5ad">3</text>
<polygon points="311.5,125.5 329.5,125.5 320.5,141.0" fill="none" stroke="#0aa5ad" stroke-width="1" shape-rendering="crispEdges"/><text x="320.5" y="122.0" font-size="16" text-anchor="middle" fill="#0aa5ad">4</text>
<text x="92" y="172.5" font-size="16" text-anchor="middle" fill="#0aa5ad">1</text>
<polygon points="83.5,623.5 101.5,623.5 92.5,608.0" fill="none" stroke="#a8690f" stroke-width="1" shape-rendering="crispEdges"/><text x="92.5" y="643.0" font-size="16" text-anchor="middle" fill="#a8690f">1</text>
<polygon points="86.5,547.3 104.5,547.3 95.5,531.8" fill="none" stroke="#a8690f" stroke-width="1" shape-rendering="crispEdges"/><text x="95.5" y="566.8" font-size="16" text-anchor="middle" fill="#a8690f">2</text>
<polygon points="311.5,393.3 329.5,393.3 320.5,408.8" fill="none" stroke="#a8690f" stroke-width="1" shape-rendering="crispEdges"/><text x="320.5" y="389.8" font-size="16" text-anchor="middle" fill="#a8690f">4</text>
<text x="91" y="568" font-size="16" text-anchor="middle" fill="#a8690f">1</text>
<polygon points="83.5,600.1 101.5,600.1 92.5,584.6" fill="none" stroke="#40ff40" stroke-width="1" shape-rendering="crispEdges"/>
<polygon points="86.5,617.7 104.5,617.7 95.5,602.2" fill="none" stroke="#40ff40" stroke-width="1" shape-rendering="crispEdges"/><text x="95.5" y="637.2" font-size="16" text-anchor="middle" fill="#40ff40">2</text>
<polygon points="103.5,718.5 121.5,718.5 112.5,703.0" fill="none" stroke="#40ff40" stroke-width="1" shape-rendering="crispEdges"/>
<text x="112.5" y="738.8" font-size="16" text-anchor="middle" fill="#40ff40">3</text>
<polygon points="311.5,264.4 329.5,264.4 320.5,279.9" fill="none" stroke="#40ff40" stroke-width="1" shape-rendering="crispEdges"/><text x="320.5" y="260.9" font-size="16" text-anchor="middle" fill="#40ff40">4</text>
<polygon points="77.5,707 77.5,720 87.5,713.5" fill="#40ff40"/>
<polygon points="1016,707 1016,720 1005,713.5" fill="#40ff40"/>
<polygon points="1016,121 1016,134 1005,127.5" fill="#0aa5ad"/>
<text x="87" y="95" font-size="16" fill="#a8690f" xml:space="preserve">Tr  1</text><text x="130" y="95" font-size="16" fill="#a8690f" xml:space="preserve">S11 SWR 0.100U/  1.00U</text>
<text x="552" y="95" font-size="16" fill="#0aa5ad" xml:space="preserve">Tr  2</text><text x="595.5" y="95" font-size="16" fill="#0aa5ad" xml:space="preserve">S21 LogM 10.00dB/  0.00dB</text>
<rect x="86" y="105" width="33" height="20" fill="#40ff40"/>
<text x="87" y="121" font-size="16" fill="#000" xml:space="preserve">Tr  4</text>
<text x="130" y="121" font-size="16" fill="#40ff40" xml:space="preserve">S22 SWR 0.100U/  1.00U</text>
<text x="414" y="189" font-size="16" text-anchor="end" fill="#a8690f">1:</text>
<text x="544" y="189" font-size="16" text-anchor="end" fill="#a8690f">20.000 0 MHz</text>
<text x="657" y="189" font-size="16" text-anchor="end" fill="#a8690f">1.18</text>
<text x="414" y="209" font-size="16" text-anchor="end" fill="#a8690f">2:</text>
<text x="544" y="209" font-size="16" text-anchor="end" fill="#a8690f">35.000 0 MHz</text>
<text x="657" y="209" font-size="16" text-anchor="end" fill="#a8690f">1.31</text>
<text x="414" y="229" font-size="16" text-anchor="end" fill="#a8690f">3:</text>
<text x="544" y="229" font-size="16" text-anchor="end" fill="#a8690f">120.000 0 MHz</text>
<text x="657" y="229" font-size="16" text-anchor="end" fill="#a8690f">1.02</text>
<text x="414" y="249" font-size="16" text-anchor="end" fill="#a8690f">4:</text>
<text x="544" y="249" font-size="16" text-anchor="end" fill="#a8690f">1.140 0 GHz</text>
<text x="657" y="249" font-size="16" text-anchor="end" fill="#a8690f">1.52</text>
<text x="414" y="269" font-size="16" text-anchor="end" fill="#0aa5ad">1:</text>
<text x="544" y="269" font-size="16" text-anchor="end" fill="#0aa5ad">20.000 0 MHz</text>
<text x="661" y="269" font-size="16" text-anchor="end" fill="#0aa5ad">-1.18 dB</text>
<text x="414" y="289" font-size="16" text-anchor="end" fill="#0aa5ad">2:</text>
<text x="544" y="289" font-size="16" text-anchor="end" fill="#0aa5ad">35.000 0 MHz</text>
<text x="661" y="289" font-size="16" text-anchor="end" fill="#0aa5ad">-1.68 dB</text>
<text x="414" y="309" font-size="16" text-anchor="end" fill="#0aa5ad">3:</text>
<text x="544" y="309" font-size="16" text-anchor="end" fill="#0aa5ad">120.000 0 MHz</text>
<text x="661" y="309" font-size="16" text-anchor="end" fill="#0aa5ad">-0.19 dB</text>
<text x="414" y="329" font-size="16" text-anchor="end" fill="#0aa5ad">4:</text>
<text x="544" y="329" font-size="16" text-anchor="end" fill="#0aa5ad">1.140 0 GHz</text>
<text x="661" y="329" font-size="16" text-anchor="end" fill="#0aa5ad">-2.47 dB</text>
<text x="414" y="349" font-size="16" text-anchor="end" fill="#40ff40">1:</text>
<text x="544" y="349" font-size="16" text-anchor="end" fill="#40ff40">20.000 0 MHz</text>
<text x="657" y="349" font-size="16" text-anchor="end" fill="#40ff40">1.22</text>
<text x="414" y="369" font-size="16" text-anchor="end" fill="#40ff40">2:</text>
<text x="544" y="369" font-size="16" text-anchor="end" fill="#40ff40">35.000 0 MHz</text>
<text x="657" y="369" font-size="16" text-anchor="end" fill="#40ff40">1.19</text>
<text x="414" y="389" font-size="16" text-anchor="end" fill="#40ff40">3:</text>
<text x="544" y="389" font-size="16" text-anchor="end" fill="#40ff40">120.000 0 MHz</text>
<text x="657" y="389" font-size="16" text-anchor="end" fill="#40ff40">1.02</text>
<text x="414" y="409" font-size="16" text-anchor="end" fill="#40ff40">4:</text>
<text x="544" y="409" font-size="16" text-anchor="end" fill="#40ff40">1.140 0 GHz</text>
<text x="657" y="409" font-size="16" text-anchor="end" fill="#40ff40">1.74</text>
<text x="389" y="409" font-size="16" fill="#40ff40">&gt;</text>
</svg>
<div id="panel" class="abs">
<div id="phead" class="abs"><div class="ttl">Marker</div><div class="cls"><div class="hl"></div><svg width="25" height="24" viewBox="0 0 25 24" style="position:absolute;left:0;top:0"><path d="M8.2,8.2 L16.8,16.6 M16.8,8.2 L8.2,16.6" stroke="#fff" stroke-width="2.2"/></svg></div></div>
<div id="tabs" class="abs"></div>
<div class="tabbox" style="top:104.5px"></div>
<div class="tabbox" style="top:168.7px"></div>
<div class="tabbox" style="top:232.9px"></div>
<div class="tab" style="top:54px">Marker<br>1-7</div>
<div class="tab" style="top:118px">Marker<br>8-15</div>
<div class="tab" style="top:182px">Marker<br>Setup</div>
<div class="tab" style="top:246px">Marker <svg width="17" height="12" viewBox="0 0 17 12" style="vertical-align:0px"><path d="M1,6 H13 M9,1.5 L14,6 L9,10.5" stroke="#e4e4e4" stroke-width="2.2" fill="none" stroke-linecap="round" stroke-linejoin="round"/></svg><br>Functions</div>
<div class="tog" style="top:47.0px"><div class="led on"></div></div>
<div class="mb" style="top:47.0px"><div class="n">Marker 1</div><div class="v">20 MHz</div></div>
<div class="tog" style="top:130.3px"><div class="led on"></div></div>
<div class="mb" style="top:130.3px"><div class="n">Marker 2</div><div class="v">35 MHz</div></div>
<div class="tog" style="top:213.6px"><div class="led on"></div></div>
<div class="mb" style="top:213.6px"><div class="n">Marker 3</div><div class="v">120 MHz</div></div>
<div class="tog" style="top:296.9px"><div class="led on"></div></div>
<div class="mb act" style="top:296.9px"><div class="n">Marker 4</div><div class="v">1.14 GHz</div></div>
<div class="tog" style="top:380.2px"><div class="led"></div></div>
<div class="mb" style="top:380.2px"><div class="n">Marker 5</div><div class="v">---</div></div>
<div class="tog" style="top:463.5px"><div class="led"></div></div>
<div class="mb" style="top:463.5px"><div class="n">Marker 6</div><div class="v">---</div></div>
<div class="tog" style="top:546.8px"><div class="led"></div></div>
<div class="mb" style="top:546.8px"><div class="n">Marker 7</div><div class="v">---</div></div>
<div class="tog" style="top:630.1px"><div class="led"></div></div>
<div class="mb" style="top:630.1px"><div class="n">Reference</div><div class="v">---</div></div>
</div>
<div class="sbtn" style="left:3.5px;top:749px;width:47.5px">Tr 4</div>
<div class="sbtn" style="left:54.5px;top:749px;width:54.0px">Ch 1</div>
<div class="sbtn" style="left:112.0px;top:749px;width:60.5px">IntTrig</div>
<div class="sbtn" style="left:177.0px;top:749px;width:53.0px">Swp *</div>
<div class="sbtn" style="left:233.5px;top:749px;width:77.5px">BW=1k</div>
<div class="sbtn" style="left:314.5px;top:749px;width:82.5px">C&nbsp; 2-Port</div>
<div class="sbtn dis" style="left:401.0px;top:749px;width:53.5px">SrcCal</div>
<div class="sbtn dis" style="left:458.0px;top:749px;width:39.0px">Fix</div>
<div class="sbtn dis" style="left:501.0px;top:749px;width:49.0px">Pulse</div>
<div class="sbtn" style="left:553.5px;top:749px;width:718px"></div>
<div class="sbtn dis" style="left:3.5px;top:772px;width:40.0px">Svc</div>
<div class="sbtn" style="left:48.0px;top:772px;width:64.0px">RFOn</div>
<div class="sbtn" style="left:116.0px;top:772px;width:83.5px">UpdateOn</div>
<div class="sbtn" style="left:203.0px;top:772px;width:64.0px">IntRef</div>
<div class="sbtn" style="left:270.5px;top:772px;width:1001px"></div>
<div class="abs" style="left:1276px;top:0;width:1px;height:797px;background:#555"></div><div class="abs" style="left:0;top:796px;width:1277px;height:1px;background:#666"></div>
<div id="wm" class="abs">www.xahxmicrowave.com</div>
</body>
</html>
